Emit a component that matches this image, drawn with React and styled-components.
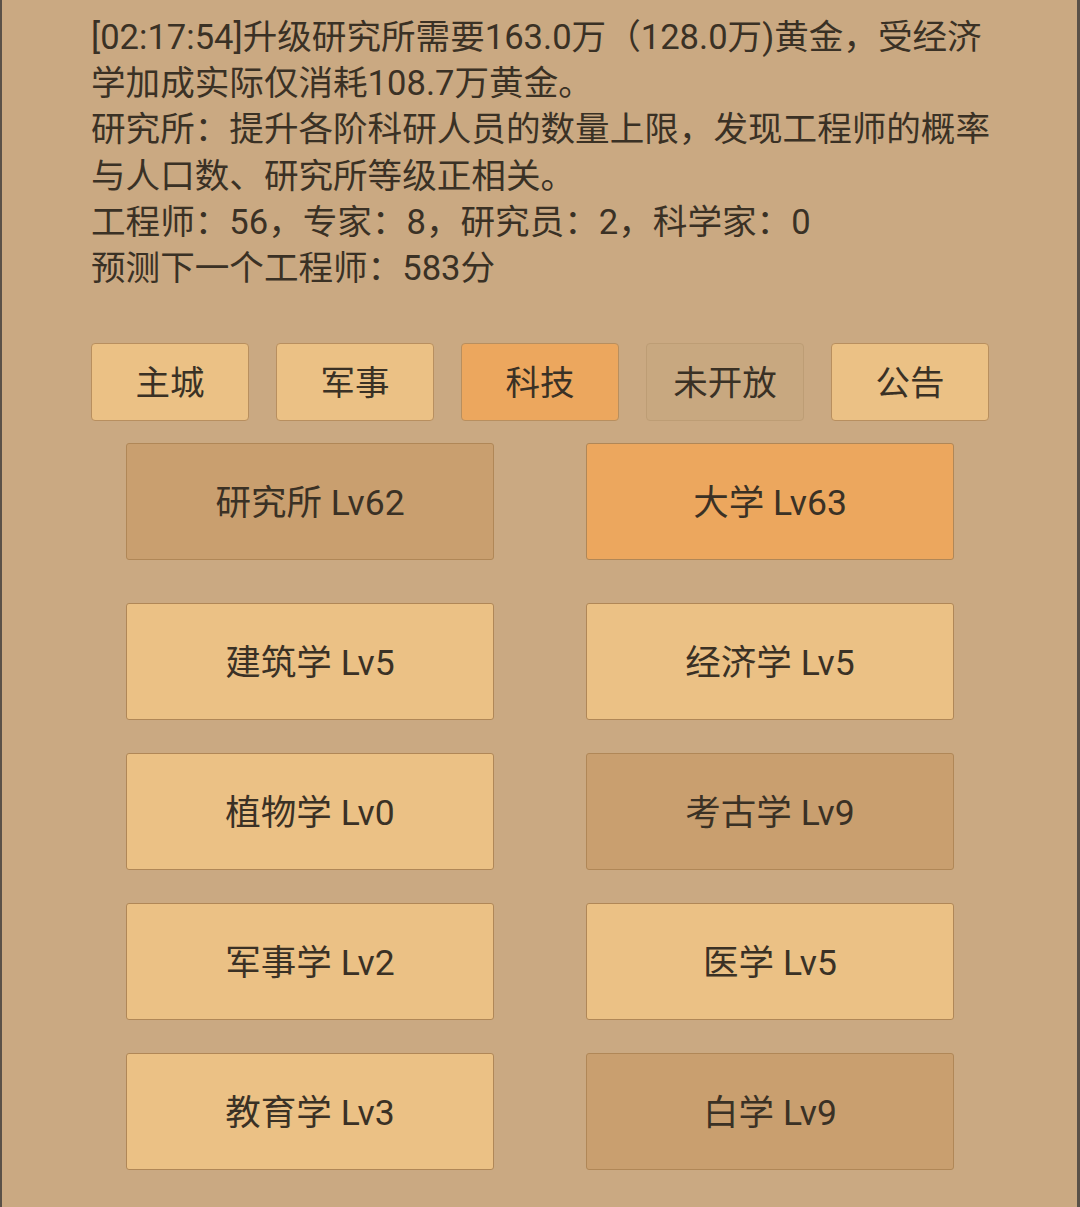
import React from 'react'
import styled, { createGlobalStyle } from 'styled-components'

const GlobalStyle = createGlobalStyle`
  html, body {
    margin: 0;
    padding: 0;
    background: #caa982;
  }
  body {
    font-family: Roboto, "Noto Sans CJK SC", sans-serif;
  }
`

const Page = styled.div`
  box-sizing: border-box;
  width: 1080px;
  height: 1207px;
  background: #caa982;
  border-left: 2px solid #5a5148;
  border-right: 3px solid #5a5148;
  padding-top: 14px;
  overflow: hidden;
`

const Log = styled.div`
  padding-left: 89px;
  color: #3a3125;
  font-size: 34.6px;
  line-height: 46.2px;
`

const Line = styled.div`
  white-space: nowrap;
`

const Tabs = styled.div`
  display: flex;
  gap: 27px;
  padding-left: 89px;
  margin-top: 52px;
`

const Tab = styled.div`
  box-sizing: border-box;
  width: 158px;
  height: 78px;
  padding-bottom: 5px;
  display: flex;
  align-items: center;
  justify-content: center;
  border-radius: 4px;
  border: 1.5px solid ${p => (p.$state === 'off' ? '#bd9d75' : '#b88f5f')};
  background: ${p =>
    p.$state === 'active' ? '#eca75e' : p.$state === 'off' ? '#c8a880' : '#ebc185'};
  color: #3a3125;
  font-size: 34.5px;
`

const Grid = styled.div`
  display: grid;
  grid-template-columns: 368px 368px;
  column-gap: 92px;
  padding-left: 124px;
  margin-top: 22px;
`

const Row = styled.div`
  display: contents;
`

const Card = styled.div`
  box-sizing: border-box;
  height: 117px;
  padding-bottom: 5px;
  margin-bottom: ${p => (p.$first ? '43px' : '33px')};
  display: flex;
  align-items: center;
  justify-content: center;
  border-radius: 3px;
  border: 1.5px solid #b08757;
  background: ${p =>
    p.$tone === 'active' ? '#eca75e' : p.$tone === 'dim' ? '#c99f6f' : '#ebc185'};
  color: #3a3125;
  font-size: 35.5px;
`

const tabs = [
  { name: '主城' },
  { name: '军事' },
  { name: '科技', state: 'active' },
  { name: '未开放', state: 'off' },
  { name: '公告' },
]

const rows = [
  [
    { name: '研究所 Lv62', tone: 'dim' },
    { name: '大学 Lv63', tone: 'active' },
  ],
  [{ name: '建筑学 Lv5' }, { name: '经济学 Lv5' }],
  [{ name: '植物学 Lv0' }, { name: '考古学 Lv9', tone: 'dim' }],
  [{ name: '军事学 Lv2' }, { name: '医学 Lv5' }],
  [{ name: '教育学 Lv3' }, { name: '白学 Lv9', tone: 'dim' }],
]

export default function App() {
  return (
    <Page>
      <GlobalStyle />
      <Log>
        <Line>[02:17:54]升级研究所需要163.0万（128.0万)黄金，受经济</Line>
        <Line>学加成实际仅消耗108.7万黄金。</Line>
        <Line>研究所：提升各阶科研人员的数量上限，发现工程师的概率</Line>
        <Line>与人口数、研究所等级正相关。</Line>
        <Line>工程师：56，专家：8，研究员：2，科学家：0</Line>
        <Line>预测下一个工程师：583分</Line>
      </Log>
      <Tabs>
        {tabs.map(t => (
          <Tab key={t.name} $state={t.state}>
            {t.name}
          </Tab>
        ))}
      </Tabs>
      <Grid>
        {rows.map((r, i) => (
          <Row key={i}>
            {r.map(c => (
              <Card key={c.name} $tone={c.tone} $first={i === 0}>
                {c.name}
              </Card>
            ))}
          </Row>
        ))}
      </Grid>
    </Page>
  )
}
